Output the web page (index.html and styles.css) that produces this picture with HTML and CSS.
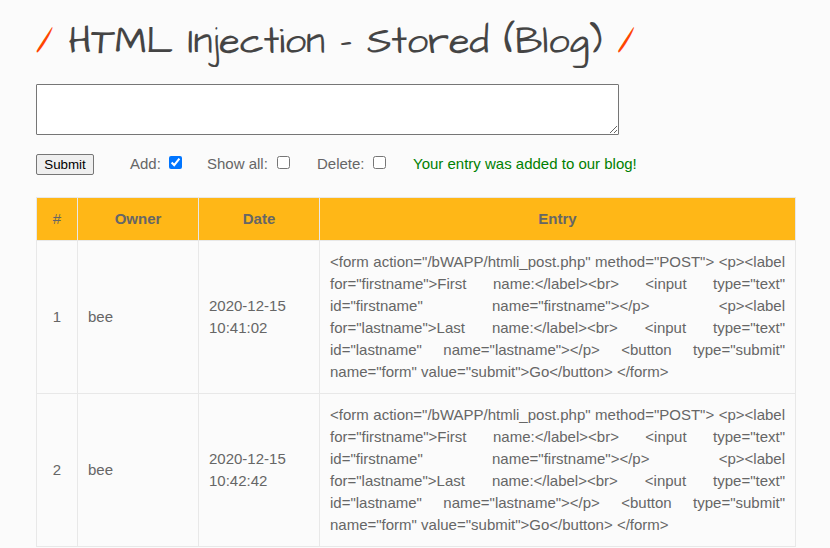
FILE: index.html
```html
<!DOCTYPE html>
<html lang="en">
<head>
<meta charset="utf-8">
<title>HTML Injection - Stored (Blog)</title>
<link rel="stylesheet" href="styles.css">
</head>
<body>
<main class="page">
  <h1 class="title"><span class="slash">/</span> HTML Injection - Stored (Blog) <span class="slash">/</span></h1>
  <form class="entry-form">
    <textarea class="entry-box" aria-label="Entry"></textarea>
    <div class="controls">
      <button class="submit" type="button">Submit</button>
      <label class="option option-add">Add: <input type="checkbox" checked></label>
      <label class="option option-all">Show all: <input type="checkbox"></label>
      <label class="option option-delete">Delete: <input type="checkbox"></label>
      <span class="message">Your entry was added to our blog!</span>
    </div>
  </form>
  <table class="blog">
    <colgroup><col class="c-num"><col class="c-owner"><col class="c-date"><col></colgroup>
    <thead>
      <tr><th class="num">#</th><th>Owner</th><th>Date</th><th>Entry</th></tr>
    </thead>
    <tbody>
      <tr>
        <td class="num">1</td><td>bee</td><td>2020-12-15 10:41:02</td>
        <td class="entry">&lt;form action="/bWAPP/htmli_post.php" method="POST"&gt; &lt;p&gt;&lt;label for="firstname"&gt;First name:&lt;/label&gt;&lt;br&gt; &lt;input type="text" id="firstname" name="firstname"&gt;&lt;/p&gt; &lt;p&gt;&lt;label for="lastname"&gt;Last name:&lt;/label&gt;&lt;br&gt; &lt;input type="text" id="lastname" name="lastname"&gt;&lt;/p&gt; &lt;button type="submit" name="form" value="submit"&gt;Go&lt;/button&gt; &lt;/form&gt;</td>
      </tr>
      <tr>
        <td class="num">2</td><td>bee</td><td>2020-12-15 10:42:42</td>
        <td class="entry">&lt;form action="/bWAPP/htmli_post.php" method="POST"&gt; &lt;p&gt;&lt;label for="firstname"&gt;First name:&lt;/label&gt;&lt;br&gt; &lt;input type="text" id="firstname" name="firstname"&gt;&lt;/p&gt; &lt;p&gt;&lt;label for="lastname"&gt;Last name:&lt;/label&gt;&lt;br&gt; &lt;input type="text" id="lastname" name="lastname"&gt;&lt;/p&gt; &lt;button type="submit" name="form" value="submit"&gt;Go&lt;/button&gt; &lt;/form&gt;</td>
      </tr>
    </tbody>
  </table>
</main>
</body>
</html>
```
FILE: styles.css
```css
* { box-sizing: border-box; }
body {
  margin: 0;
  height: 548px;
  overflow: hidden;
  background: #fbfbfb;
  color: #666;
  font: 15px/22px Arial, "Liberation Sans", sans-serif;
}
.page { width: 760px; margin-left: 36px; }
.title {
  margin: 0;
  height: 84px;
  padding-top: 20px;
  color: #444;
  font: 400 38px/44px "Architects Daughter", Lato, sans-serif;
  letter-spacing: -0.05px;
  -webkit-text-stroke: 0.1px currentColor;
  white-space: nowrap;
}
.slash { color: #ff4500; }
.entry-form { margin: 0; }
.entry-box {
  display: block;
  width: 583px;
  height: 51px;
  border: 1px solid #767676;
  border-radius: 1px;
  background: #fff;
}
.controls {
  display: flex;
  align-items: center;
  height: 22px;
  margin-top: 18px;
}
.submit {
  width: 58px;
  height: 21px;
  padding: 0;
  border: 1px solid #767676;
  border-radius: 2px;
  background: #efefef;
  color: #000;
  font: 13.333px Arial, "Liberation Sans", sans-serif;
}
.option { display: flex; align-items: center; justify-content: space-between; }
.option input { width: 13px; height: 13px; margin: 0 0 4px; }
.option-add { width: 52px; margin-left: 36px; }
.option-all { width: 83px; margin-left: 25px; }
.option-delete { width: 69px; margin-left: 27px; }
.message { margin-left: 27px; color: green; }
.blog {
  width: 760px;
  margin-top: 22px;
  border-collapse: collapse;
  table-layout: fixed;
}
.c-num { width: 41px; }
.c-owner, .c-date { width: 121px; }
.blog th, .blog td { padding: 10px; border: 1px solid #e8e8e8; }
.blog th { background: #ffb717; }
.blog .num { font-weight: 400; text-align: center; }
.entry { text-align: justify; }
```
